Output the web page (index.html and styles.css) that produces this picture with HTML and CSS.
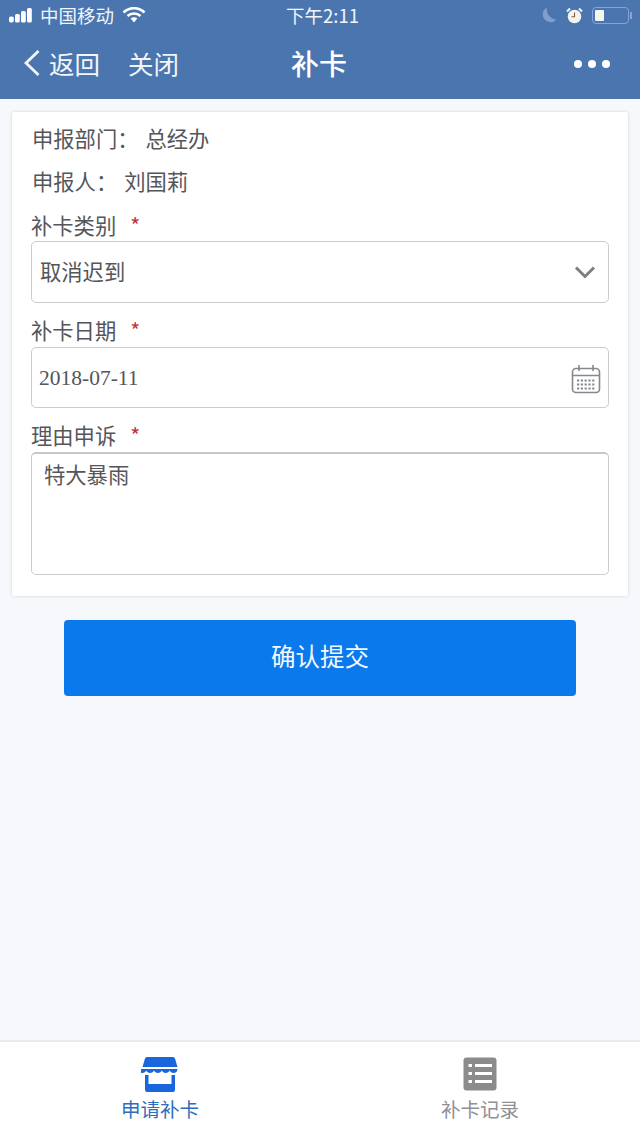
FILE: index.html
```html
<!DOCTYPE html>
<html lang="zh">
<head>
<meta charset="utf-8">
<title>补卡</title>
<link rel="stylesheet" href="styles.css">
</head>
<body>
<div class="app">
  <header class="header">
    <div class="status">
      <div class="status-left">
        <svg class="signal" width="24" height="16" viewBox="0 0 24 16"><rect x="0" y="9.500" width="4.800" height="6" rx="1.800"/><rect x="6" y="7" width="4.800" height="8.500" rx="1.500"/><rect x="12" y="4" width="4.800" height="11.500" rx="1.500"/><rect x="18" y="1" width="4.800" height="14.500" rx="1.500"/></svg>
        <span class="carrier">中国移动</span>
        <svg class="wifi" width="24" height="16" viewBox="0 0 24 16"><path d="M1.500 5.500a15 15 0 0 1 21 0" fill="none" stroke="#fff" stroke-width="2.600"/><path d="M5.500 9a9.500 9.500 0 0 1 13 0" fill="none" stroke="#fff" stroke-width="2.600"/><path d="M8.700 11.600a5 5 0 0 1 6.600 0L12 15.400z" fill="#fff"/></svg>
      </div>
      <div class="time">下午2:11</div>
      <div class="status-right">
        <svg class="moon" width="16" height="16" viewBox="0 0 16 16"><path d="M6 .5A10 10 0 0 0 15.500 12.500 7.800 7.800 0 1 1 6 .5z" fill="#7f9fd0"/></svg>
        <svg width="17" height="17" viewBox="0 0 17 17"><circle cx="8.500" cy="9.500" r="6.800" fill="#f4f4ee"/><path d="M8.500 5.500v4.300H5.500" fill="none" stroke="#8a5a50" stroke-width="1.100"/><path d="M1 4.500 4 1.500M16 4.500l-3-3" stroke="#f4f4ee" stroke-width="2"/></svg>
        <div class="battery"><div class="battery-level"></div></div>
        <div class="battery-tip"></div>
      </div>
    </div>
    <nav class="nav">
      <div class="nav-left">
        <svg class="back" width="18" height="28" viewBox="0 0 18 28"><path d="M15.500 2 3 14l12.500 12" fill="none" stroke="#f1f5fa" stroke-width="2.800"/></svg>
        <span class="back-text">返回</span>
        <span class="close-text">关闭</span>
      </div>
      <h1 class="nav-title">补卡</h1>
      <div class="dots"><i></i><i></i><i></i></div>
    </nav>
  </header>

  <main class="main">
    <form class="card">
      <div class="info"><span class="info-label">申报部门：</span><span class="value">总经办</span></div>
      <div class="info"><span class="info-label">申报人：</span><span class="value">刘国莉</span></div>
      <div class="label label-first">补卡类别<span class="star">*</span></div>
      <div class="field field-select">
        <span>取消迟到</span>
        <svg width="22" height="14" viewBox="0 0 22 14"><path d="M2 2.500l9 9 9-9" fill="none" stroke="#7b7e82" stroke-width="3"/></svg>
      </div>
      <div class="label">补卡日期<span class="star">*</span></div>
      <div class="field field-date">
        <span class="date">2018-07-11</span>
        <svg width="30" height="30" viewBox="0 0 30 30" fill="none" stroke="#85888c"><rect x="1.500" y="4.500" width="27" height="24" rx="3.500" stroke-width="1.600"/><path d="M1.500 11.500h27M8 1v6M22 1v6" stroke-width="1.600"/><path d="M6 16.500h18M6 20.500h18M6 24.500h18" stroke-width="2" stroke-dasharray="2.200 1.600"/></svg>
      </div>
      <div class="label">理由申诉<span class="star">*</span></div>
      <div class="field field-area">特大暴雨</div>
    </form>
    <button class="submit" type="button">确认提交</button>
  </main>

  <footer class="tabbar">
    <div class="tab tab-active">
      <svg width="38" height="38" viewBox="0 -1 38 38"><path d="M6 1h26a2 2 0 0 1 2 1.500L36.500 11h-35L4 2.500A2 2 0 0 1 6 1z" fill="#1a66dc"/><path d="M1.500 13h35c0 2.500-1.700 4-3.900 4-1.900 0-3.300-1-3.900-2.500-.7 1.500-2.200 2.500-4 2.500s-3.200-1-3.900-2.500c-.7 1.500-2.100 2.500-3.900 2.500s-3.200-1-3.900-2.500c-.7 1.500-2.100 2.500-3.900 2.500s-3.300-1-3.900-2.500c-.6 1.500-2 2.500-3.900 2.500-2.200 0-3.800-1.500-3.800-4z" fill="#1a66dc"/><path d="M4 19h3.500v9h23v-9H34v15a2 2 0 0 1-2 2H6a2 2 0 0 1-2-2z" fill="#1a66dc"/></svg>
      <span>申请补卡</span>
    </div>
    <div class="tab">
      <svg width="38" height="38" viewBox="0 0 38 38"><rect x="2.500" y="2.500" width="33" height="33" rx="3" fill="#8b8b8b"/><path d="M7.500 10.500h3.500M14 10.500h17M7.500 18.500h3.500M14 18.500h17M7.500 26.500h3.500M14 26.500h17" stroke="#fff" stroke-width="3"/></svg>
      <span>补卡记录</span>
    </div>
  </footer>
</div>
</body>
</html>
```
FILE: styles.css
```css
* { box-sizing: border-box; }
html, body { margin: 0; padding: 0; }
body {
  font-family: "Noto Sans CJK SC", "Noto Sans", sans-serif;
  color: #54565a;
  background: #f6f8fb;
}
.app {
  width: 640px;
  height: 1138px;
  display: flex;
  flex-direction: column;
  overflow: hidden;
}
.header { height: 99px; background: #4a75ae; color: #f1f5fa; flex: none; }
.status {
  height: 32px;
  padding: 0 8px 2px 9px;
  display: grid;
  grid-template-columns: 1fr auto 1fr;
  align-items: center;
}
.status-left { display: flex; align-items: center; }
.signal { fill: #fff; margin-right: 7px; }
.carrier { font-size: 18.500px; line-height: 30px; }
.wifi { margin-left: 8px; }
.time { font-size: 18.500px; line-height: 30px; margin-left: 4px; }
.status-right { display: flex; align-items: center; justify-content: flex-end; }
.moon { margin-right: 9px; }
.battery {
  width: 37px;
  height: 17px;
  margin-left: 9px;
  border: 1.500px solid #86a5d6;
  border-radius: 4px;
  padding: 2px;
}
.battery-level { width: 9px; height: 100%; background: #f6f6f0; border-radius: 1px; }
.battery-tip { width: 2px; height: 7px; background: #86a5d6; margin-left: 1px; }
.nav {
  height: 67px;
  padding: 0 23px 5px;
  display: grid;
  grid-template-columns: 1fr auto 1fr;
  align-items: center;
}
.nav-left { display: flex; align-items: center; }
.back { margin-right: 8px; }
.back-text, .close-text { font-size: 25.500px; line-height: 32px; }
.close-text { margin-left: 28px; }
.nav-title {
  margin: 0 2px 0 0;
  font-size: 28px;
  font-weight: 500;
  line-height: 32px;
  color: #fff;
}
.dots { display: flex; gap: 6px; justify-content: flex-end; margin: 2px 7px 0 0; }
.dots i { display: block; width: 8px; height: 8px; border-radius: 50%; background: #fff; }
.main { flex: 1; padding: 13px 12px 0; }
.card {
  height: 484px;
  background: #fff;
  border-radius: 2px;
  box-shadow: 0 0 3px rgba(60, 70, 90, .22);
  padding: 11px 19px 0;
}
.info { font-size: 21.300px; line-height: 30px; margin-bottom: 13px; padding-left: 1px; display: flex; }
.value { margin-left: 7px; }
.label { font-size: 21.300px; line-height: 30px; margin: 12px 0 2px; display: flex; }
.label-first { margin: 14px 0 1px; }
.star { color: #c0333c; margin-left: 14px; }
.field {
  background: #fff;
  border: 1.500px solid #c9ccd0;
  border-radius: 5px;
  display: flex;
  align-items: center;
  justify-content: space-between;
  font-size: 21.300px;
}
.field-select { height: 62px; padding: 0 12px 4px 8px; }
.field-select svg { margin-top: 4px; }
.field-date { height: 61px; padding: 2px 7px 0; }
.date { font-family: "Liberation Serif", serif; font-size: 21.500px; }
.field-area {
  height: 123px;
  padding: 5px 12px;
  align-items: flex-start;
  line-height: 30px;
  border-top: 2.500px solid #c6c8cb;
}
.submit {
  display: block;
  width: 512px;
  height: 76px;
  margin: 24px auto 0;
  padding: 0 0 6px;
  border: 0;
  border-radius: 4px;
  background: #0a79eb;
  color: #f2f8ff;
  font: inherit;
  font-size: 24.500px;
}
.tabbar {
  flex: none;
  height: 98px;
  background: #fff;
  border-top: 2px solid #e9ebef;
  display: flex;
}
.tab {
  flex: 1;
  display: flex;
  flex-direction: column;
  align-items: center;
  padding-top: 13px;
  color: #8d9095;
  font-size: 19.500px;
  line-height: 28px;
}
.tab svg { display: block; margin-bottom: 2px; }
.tab-active { color: #2e6ebd; }
```
